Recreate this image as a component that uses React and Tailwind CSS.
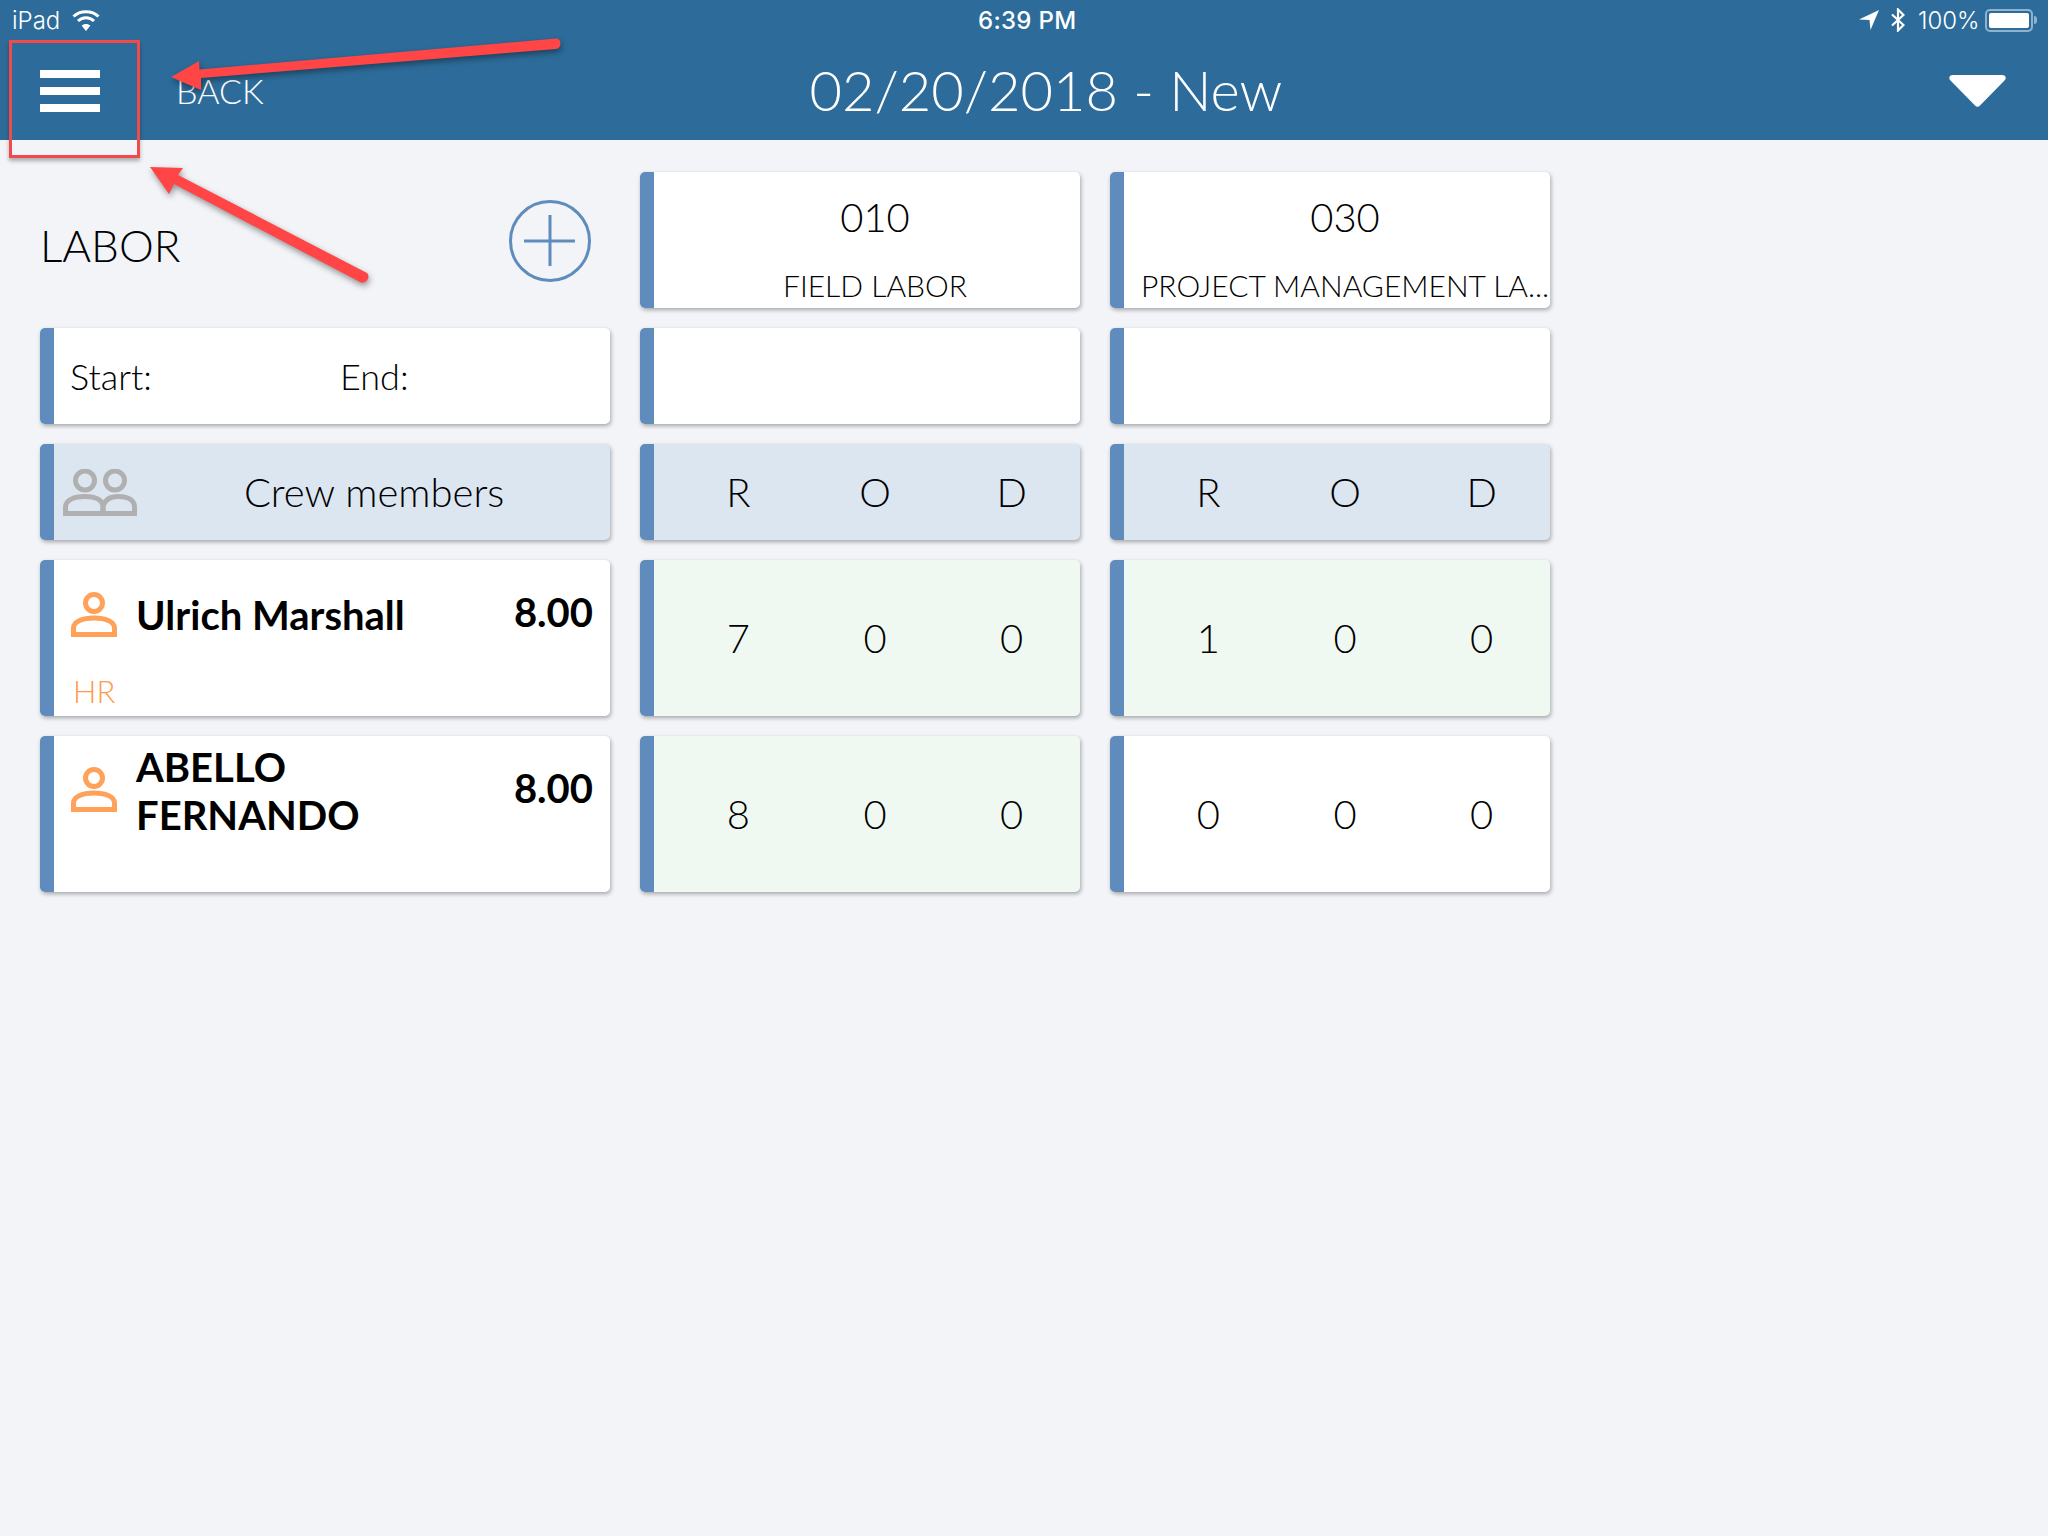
import React from "react";

const Person = ({ className = "" }) => (
  <svg viewBox="0 0 46 45" className={className} fill="none" stroke="#ffa158" strokeWidth="5">
    <circle cx="23" cy="11" r="8.5" />
    <path d="M2.500 42.500V36C2.500 29.500 12 26 23 26S43.500 29.500 43.500 36V42.500Z" />
  </svg>
);

const Crew = () => (
  <svg viewBox="0 0 74 47" className="w-[74px] h-[47px]" fill="none" stroke="#b0b0b0" strokeWidth="5">
    <circle cx="22" cy="11.5" r="9.5" />
    <circle cx="52" cy="11.5" r="9.5" />
    <path d="M2.500 44.500V38C2.500 31 11 27.500 22 27.500S40 31 40 38V44.500Z" />
    <path d="M40 44.500V37C42 31 47 27.500 55 27.500C65 27.500 71.500 31 71.500 38V44.500Z" />
  </svg>
);

const Card = ({ bg = "bg-white", children, className = "" }) => (
  <div className={`flex rounded-[5px] overflow-hidden shadow-[1px_2px_4px_rgba(0,0,0,0.32)] ${bg} ${className}`}>
    <div className="w-[14px] shrink-0 bg-[#5f8bbd]" />
    <div className="flex-1 min-w-0">{children}</div>
  </div>
);

const Triple = ({ bg, values }) => (
  <Card bg={bg}>
    <div className="grid grid-cols-3 h-full pl-[16px] text-[40px] font-light text-black items-center text-center">
      {values.map((v, i) => (
        <span key={i}>{v}</span>
      ))}
    </div>
  </Card>
);

const Head = ({ code, name }) => (
  <Card>
    <div className="h-full pl-[16px] flex flex-col items-center text-black font-light">
      <div className="text-[40px] leading-[48px] mt-[21px]">{code}</div>
      <div className="text-[30px] leading-[36px] mt-[26px] w-full text-center whitespace-nowrap">{name}</div>
    </div>
  </Card>
);

const Worker = ({ name, hours, dept, top, iconTop, hoursTop }) => (
  <Card>
    <div className="relative h-full flex items-start pl-[17px] pr-[17px] text-black">
      <Person className={`w-[46px] h-[45px] shrink-0 ${iconTop}`} />
      <div className={`ml-[19px] text-[40px] leading-[48px] font-bold flex-1 ${top}`}>{name}</div>
      <div className={`text-[40px] leading-[48px] font-bold ${hoursTop}`}>{hours}</div>
      {dept && (
        <div className="absolute left-[19px] top-[112px] text-[31px] leading-[38px] font-light text-[#ff9a4d]">{dept}</div>
      )}
    </div>
  </Card>
);

export default function App() {
  return (
    <div className="relative w-[2048px] h-[1536px] bg-[#f2f4f8] overflow-hidden [font-family:Lato,sans-serif]">
      <header className="h-[140px] bg-[#2d6c9a] text-white">
        <div className="h-[42px] flex items-center pl-[12px] pr-[11px] text-[24px] font-light [font-family:Inter,sans-serif] relative">
          <span>iPad</span>
          <svg viewBox="0 0 28 24" className="ml-[12px] w-[28px] h-[24px] -mt-[2px]" fill="none" stroke="white" strokeWidth="3">
            <path d="M1.500 8.500C8 2 20 2 26.500 8.500" />
            <path d="M6 13C10.500 8.500 17.500 8.500 22 13" />
            <path d="M14 23L9.600 17.600C12 15.400 16 15.400 18.400 17.600Z" fill="white" stroke="none" />
          </svg>
          <span className="absolute left-[978px] font-medium tracking-[0.3px]">6:39 PM</span>
          <div className="ml-auto flex items-center">
            <svg viewBox="0 0 20 20" className="w-[20px] h-[20px] -mt-[2px]" fill="white">
              <path d="M20 0L0 9.500L10.500 10L11.500 20Z" />
            </svg>
            <svg viewBox="0 0 14 24" className="ml-[12px] w-[14px] h-[24px] -mt-[2px]" fill="none" stroke="white" strokeWidth="2.2">
              <path d="M1 6.500L12.500 17L7 22.500V1.500L12.500 7L1 17.500" />
            </svg>
            <span className="ml-[13px] w-[61px]">100%</span>
            <div className="ml-[6px] -mt-[2px] w-[48px] h-[23px] rounded-[5px] border-2 border-[#8fb2cd] p-[2px]">
              <div className="w-full h-full rounded-[2px] bg-white" />
            </div>
            <div className="w-[3px] h-[8px] -mt-[2px] rounded-r-full bg-[#8fb2cd] ml-[1px]" />
          </div>
        </div>
        <div className="h-[98px] flex items-start pl-[40px] pr-[42px]">
          <div className="mt-[28px] w-[60px] flex flex-col gap-[9.5px]">
            <div className="h-[7.5px] bg-white" />
            <div className="h-[7.5px] bg-white" />
            <div className="h-[7.5px] bg-white" />
          </div>
          <span className="ml-[76px] mt-[29px] text-[34px] leading-[40px] font-light">BACK</span>
          <span className="ml-[546px] mt-[14px] text-[56px] leading-[68px] font-light">02/20/2018 - New</span>
          <svg viewBox="0 0 57 32" className="ml-auto mt-[33px] w-[57px] h-[32px]" fill="white">
            <path d="M4 0H53C56.500 0 58 3 55.500 5.500L31 30.500C29.500 32.300 27.500 32.300 26 30.500L1.500 5.500C-1 3 0.500 0 4 0Z" />
          </svg>
        </div>
      </header>

      <main className="pt-[32px] pl-[40px] grid grid-cols-[570px_440px_440px] grid-rows-[136px_96px_96px_156px_156px] gap-x-[30px] gap-y-[20px]">
        <div className="flex items-start text-black">
          <span className="mt-[47px] text-[44px] leading-[52px] font-light">LABOR</span>
          <svg viewBox="0 0 82 82" className="ml-auto mr-[19px] mt-[28px] w-[82px] h-[82px]" fill="none" stroke="#5f8bbd" strokeWidth="3">
            <circle cx="41" cy="41" r="39.5" />
            <path d="M41 15V66M15 41H66" />
          </svg>
        </div>
        <Head code="010" name="FIELD LABOR" />
        <Head code="030" name="PROJECT MANAGEMENT LA..." />

        <Card>
          <div className="h-full flex items-center pl-[16px] text-[36px] font-light text-black">
            <span className="w-[270px]">Start:</span>
            <span>End:</span>
          </div>
        </Card>
        <Card />
        <Card />

        <Card bg="bg-[#dce6f1]">
          <div className="h-full flex items-center pl-[9px] text-[40px] font-light text-black">
            <Crew />
            <span className="ml-[107px]">Crew members</span>
          </div>
        </Card>
        <Triple bg="bg-[#dce6f1]" values={["R", "O", "D"]} />
        <Triple bg="bg-[#dce6f1]" values={["R", "O", "D"]} />

        <Worker name="Ulrich Marshall" hours="8.00" dept="HR" top="mt-[31px]" iconTop="mt-[32px]" hoursTop="mt-[28px]" />
        <Triple bg="bg-[#f0f9f1]" values={["7", "0", "0"]} />
        <Triple bg="bg-[#f0f9f1]" values={["1", "0", "0"]} />

        <Worker
          name={<>ABELLO<br />FERNANDO</>}
          hours="8.00"
          top="mt-[7px]"
          iconTop="mt-[31px]"
          hoursTop="mt-[28px]"
        />
        <Triple bg="bg-[#f0f9f1]" values={["8", "0", "0"]} />
        <Triple bg="bg-white" values={["0", "0", "0"]} />
      </main>

      <div className="absolute left-[9px] top-[40px] w-[131px] h-[118px] border-[3px] border-[#f04a4a] shadow-[0_3px_4px_rgba(0,0,0,0.3)]" />
      <svg viewBox="0 0 2048 300" className="absolute left-0 top-0 w-[2048px] h-[300px] pointer-events-none drop-shadow-[1px_3px_3px_rgba(0,0,0,0.4)]" fill="#ff4545">
        <path d="M171 77L199 61L199.500 69.500L556 38.500C562 38.500 562 48 556 49L201 78L201 90Z" />
        <path d="M150 167L183 168L178 175L367 273C371 277 366 285 360 282L174 184L169 194Z" />
      </svg>
    </div>
  );
}
